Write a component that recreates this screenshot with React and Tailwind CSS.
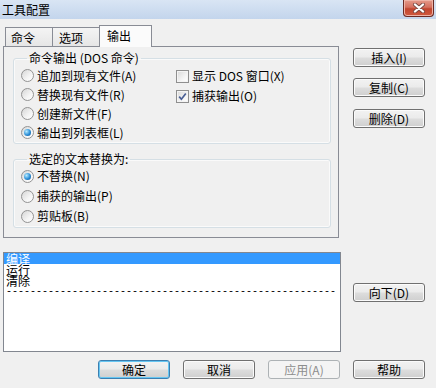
import React from "react";

const FONT = "font-['Noto_Sans_CJK_SC','Noto_Sans',sans-serif]";

function Btn({ children, kind }) {
  let cls =
    "h-[19px] w-[72px] flex items-center justify-center rounded-[3px] border text-[12px] leading-none ";
  if (kind === "default") {
    cls +=
      "border-[#3c7fb1] bg-[linear-gradient(#f2f2f2_0%,#ebebeb_48%,#dddddd_52%,#cfcfcf_100%)] shadow-[inset_0_0_0_1px_#66c6f2] text-black";
  } else if (kind === "disabled") {
    cls += "border-[#adb2b5] bg-[#f4f4f4] text-[#8d8d8d]";
  } else {
    cls +=
      "border-[#707070] bg-[linear-gradient(#f2f2f2_0%,#ebebeb_48%,#dddddd_52%,#cfcfcf_100%)] shadow-[inset_0_0_0_1px_#fbfbfb] text-black";
  }
  return <div className={cls}>{children}</div>;
}

function Radio({ checked, label }) {
  return (
    <div className="h-[19px] flex items-center gap-[3px]">
      <span className="w-[13px] h-[13px] rounded-full border border-[#939393] bg-[linear-gradient(135deg,#d6d6d6,#f4f4f4_60%,#ffffff)] flex items-center justify-center shrink-0">
        {checked && (
          <span className="w-[7px] h-[7px] rounded-full bg-[radial-gradient(circle_at_35%_35%,#b9ecff,#2b8fd8_55%,#0b4a88)]" />
        )}
      </span>
      <span className="text-[12px] leading-none text-black whitespace-nowrap">{label}</span>
    </div>
  );
}

function Check({ checked, label }) {
  return (
    <div className="h-[20px] flex items-center gap-[3px]">
      <span className="w-[13px] h-[13px] border border-[#8f8f8f] bg-[linear-gradient(135deg,#d8d8d8,#f6f6f6_65%,#ffffff)] shadow-[inset_0_0_0_1px_#f4f4f4] flex items-center justify-center shrink-0">
        {checked && (
          <svg width="11" height="11" viewBox="0 0 11 11">
            <path d="M2.2 5.6 L4.4 8.2 L8.8 2.4" fill="none" stroke="#4a5f95" strokeWidth="1.7" />
          </svg>
        )}
      </span>
      <span className="text-[12px] leading-none text-black whitespace-nowrap">{label}</span>
    </div>
  );
}

export default function App() {
  const dashes = "-".repeat(55);
  return (
    <div className={`w-[436px] h-[388px] bg-[#f0f0f0] flex flex-col overflow-hidden ${FONT}`}>
      {/* title bar */}
      <div className="h-[19px] flex justify-between bg-[linear-gradient(#d9e5f4,#c3d5ec)]">
        <div className="pl-[2px] pt-[3px] text-[12px] leading-[13px] text-black">工具配置</div>
        <div className="mr-[2px] w-[31px] h-[17px] rounded-b-[4px] border border-t-0 border-[#6b2a24] bg-[linear-gradient(#e59b8b,#d5705f_45%,#c2452f_55%,#d05a3f)] flex items-center justify-center shadow-[inset_0_0_0_1px_#efb3a6]">
          <svg width="14" height="10" viewBox="0 0 14 10">
            <path d="M3 1.5 L11 8.5 M11 1.5 L3 8.5" stroke="#7a4a44" strokeWidth="4" strokeLinecap="round" />
            <path d="M3 1.5 L11 8.5 M11 1.5 L3 8.5" stroke="#ffffff" strokeWidth="2.3" strokeLinecap="round" />
          </svg>
        </div>
      </div>

      <div className="flex pl-[3px]">
        {/* left column */}
        <div className="w-[338px] flex flex-col">
          {/* tabs */}
          <div className="mt-[6px] flex items-end pl-[2px]">
            <div className="w-[48px] h-[19px] border border-b-0 border-[#898c95] bg-[linear-gradient(#f4f4f4,#e6e6e6)] text-[12px] leading-[17px] pl-[5px] pt-[1px]">
              命令
            </div>
            <div className="-ml-px w-[48px] h-[19px] border border-b-0 border-[#898c95] bg-[linear-gradient(#f4f4f4,#e6e6e6)] text-[12px] leading-[17px] pl-[6px] pt-[1px]">
              选项
            </div>
            <div className="relative z-10 -ml-px -mb-px w-[53px] h-[22px] border border-b-0 border-[#898c95] bg-[#fbfbfb] text-[12px] leading-[17px] pl-[7px] pt-[1px]">
              输出
            </div>
          </div>
          {/* panel */}
          <div className="w-[336px] h-[192px] border border-[#898c95] pt-[4px] pl-[9px] pr-[7px] flex flex-col gap-[8px]">
            <fieldset className="border border-[#d5dfe5] rounded-[3px] pl-[7px] pb-[1px] shadow-[inset_0_0_0_1px_#fafafa]">
              <legend className="ml-[6px] px-[2px] text-[12px] leading-[14px]">命令输出 (DOS 命令)</legend>
              <div className="mt-[1px] flex">
                <div className="w-[155px] flex flex-col">
                  <Radio label="追加到现有文件(A)" />
                  <Radio label="替换现有文件(R)" />
                  <Radio label="创建新文件(F)" />
                  <Radio checked label="输出到列表框(L)" />
                </div>
                <div className="flex flex-col">
                  <Check label="显示 DOS 窗口(X)" />
                  <Check checked label="捕获输出(O)" />
                </div>
              </div>
            </fieldset>
            <fieldset className="border border-[#d5dfe5] rounded-[3px] pl-[7px] shadow-[inset_0_0_0_1px_#fafafa]">
              <legend className="ml-[6px] px-[2px] text-[12px] leading-[14px]">选定的文本替换为:</legend>
              <div className="flex flex-col pb-[1px]">
                <div className="h-[20px] flex items-center"><Radio checked label="不替换(N)" /></div>
                <div className="h-[20px] flex items-center"><Radio label="捕获的输出(P)" /></div>
                <div className="h-[20px] flex items-center"><Radio label="剪贴板(B)" /></div>
              </div>
            </fieldset>
          </div>
          {/* list */}
          <div className="mt-[14px] h-[100px] border border-[#828790] bg-white text-[12px] text-black overflow-hidden">
            <div className="h-[11px] leading-[11px] bg-[#3399ff] text-white pl-[2px]">编译</div>
            <div className="h-[11px] leading-[11px] pl-[2px]">运行</div>
            <div className="h-[11px] leading-[11px] pl-[2px]">清除</div>
            <div className="h-[11px] leading-[11px] pl-[2px] font-['Liberation_Mono',monospace] text-[10px] whitespace-nowrap">
              {dashes}
            </div>
          </div>
        </div>

        {/* right column */}
        <div className="ml-[12px] pt-[29px] flex flex-col">
          <Btn>插入(I)</Btn>
          <div className="mt-[11px]"><Btn>复制(C)</Btn></div>
          <div className="mt-[12px]"><Btn>删除(D)</Btn></div>
          <div className="mt-[155px]"><Btn>向下(D)</Btn></div>
        </div>
      </div>

      {/* bottom buttons */}
      <div className="mt-[8px] flex justify-end gap-[13px] pr-[11px]">
        <Btn kind="default">确定</Btn>
        <Btn>取消</Btn>
        <Btn kind="disabled">应用(A)</Btn>
        <Btn>帮助</Btn>
      </div>
    </div>
  );
}
